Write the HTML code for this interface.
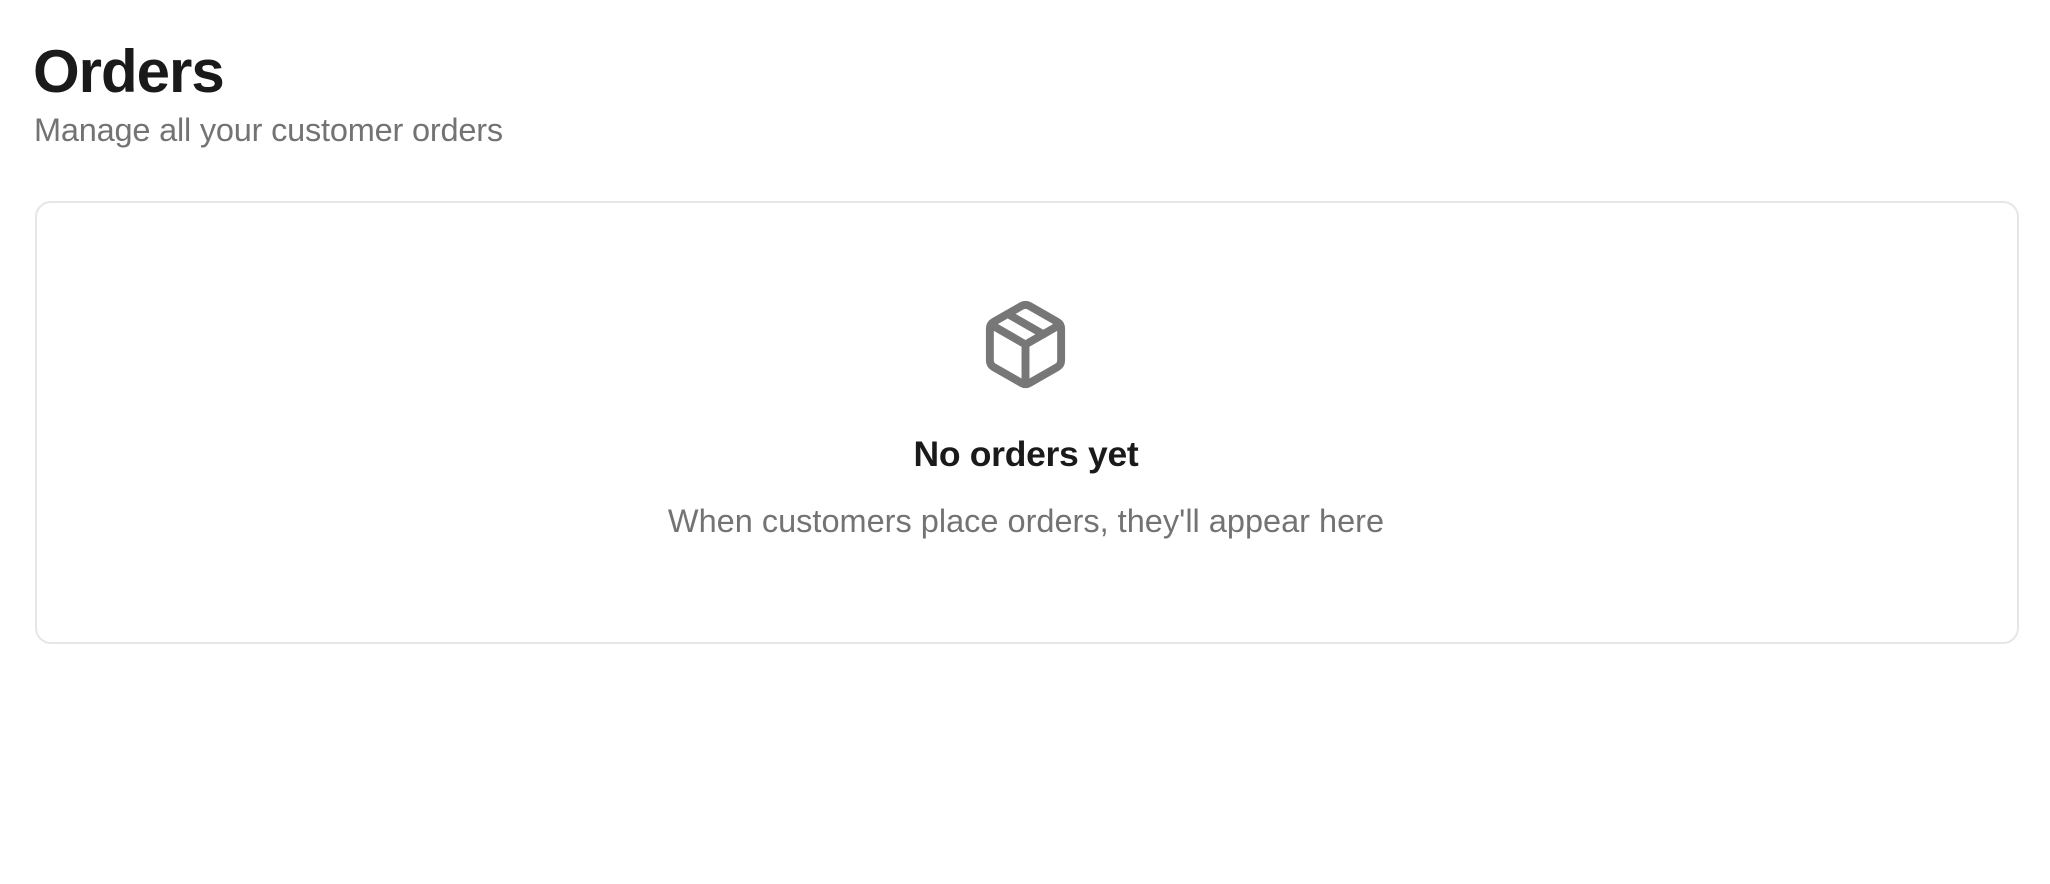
<!DOCTYPE html>
<html><head><meta charset="utf-8"><style>
html,body{margin:0;padding:0;background:#fff;width:2050px;height:884px;overflow:hidden;font-family:"Liberation Sans",sans-serif;}
h1{position:absolute;left:33px;top:37px;margin:0;font-size:60px;font-weight:bold;color:#1a1a1a;letter-spacing:-1px;line-height:70px;}
.sub{position:absolute;left:34px;top:112px;font-size:32.5px;color:#737373;letter-spacing:-0.2px;line-height:36px;}
.card{position:absolute;left:35px;top:201px;width:1984px;height:443px;border:2px solid #e6e6e6;border-radius:16px;box-sizing:border-box;}
svg{position:absolute;}
.t{position:absolute;left:0;width:2052px;text-align:center;}
.t1{top:434px;font-size:35.5px;font-weight:bold;color:#1a1a1a;letter-spacing:-0.3px;}
.t2{top:503px;font-size:32.5px;color:#737373;letter-spacing:0px;}
</style></head><body>
<h1>Orders</h1>
<div class="sub">Manage all your customer orders</div>
<div class="card"></div>
<svg style="left:978px;top:297px" width="95" height="95" viewBox="0 0 24 24" fill="none" stroke="#777" stroke-width="2" stroke-linecap="round" stroke-linejoin="round"><path d="m7.5 4.27 9 5.15"/><path d="M21 8a2 2 0 0 0-1-1.73l-7-4a2 2 0 0 0-2 0l-7 4A2 2 0 0 0 3 8v8a2 2 0 0 0 1 1.73l7 4a2 2 0 0 0 2 0l7-4A2 2 0 0 0 21 16Z"/><path d="m3.3 7 8.7 5 8.7-5"/><path d="M12 22V12"/></svg>
<div class="t t1">No orders yet</div>
<div class="t t2">When customers place orders, they'll appear here</div>
</body></html>
